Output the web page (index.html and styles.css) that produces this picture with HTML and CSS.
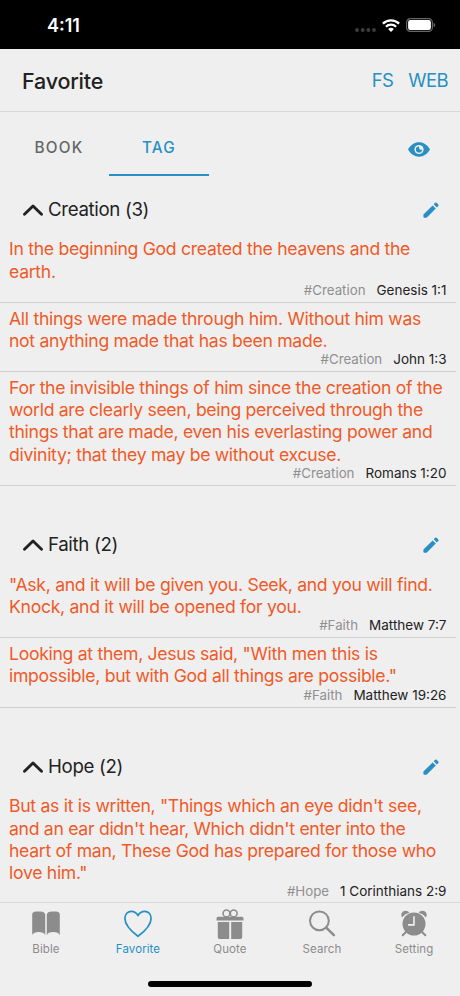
FILE: index.html
```html
<!DOCTYPE html>
<html lang="en">
<head>
<meta charset="utf-8">
<title>Favorite</title>
<link rel="stylesheet" href="styles.css">
</head>
<body>
<svg class="defs" aria-hidden="true">
  <symbol id="chevron" viewBox="0 0 20 12"><path d="M1.500 10.200 10 2l8.500 8.200" fill="none" stroke="currentColor" stroke-width="2.900" stroke-linecap="round" stroke-linejoin="round"/></symbol>
  <symbol id="pencil" viewBox="0 0 16 16"><path d="M.4 12.600 9.600 3.400 12.800 6.600 3.600 15.800H1.400q-1 0-1-1zM10.700 2.300 12.200.8q.7-.7 1.400 0l1.700 1.700q.7.7 0 1.400l-1.500 1.500z" fill="currentColor"/></symbol>
</svg>
<div class="app">
  <header class="status">
    <span class="time">4:11</span>
    <div class="indicators">
      <svg class="cell" viewBox="0 0 22 4"><g fill="#3d3d3d"><circle cx="2" cy="2" r="1.900"/><circle cx="7.700" cy="2" r="1.900"/><circle cx="13.400" cy="2" r="1.900"/><circle cx="19" cy="2" r="1.900"/></g></svg>
      <svg class="wifi" viewBox="0 0 18 13"><g fill="none" stroke="#fff" stroke-width="2.300"><path d="M.9 4.600a11.600 11.600 0 0 1 16.200 0M3.900 7.700a7.300 7.300 0 0 1 10.200 0"/></g><path d="M9 13 6.100 10.100a4.200 4.200 0 0 1 5.800 0z" fill="#fff"/></svg>
      <svg class="battery" viewBox="0 0 30 14"><rect x=".6" y=".6" width="25.800" height="12.800" rx="3.800" fill="none" stroke="#666" stroke-width="1.200"/><rect x="2.100" y="2.100" width="22.800" height="9.800" rx="2.200" fill="#fff"/><path d="M27.600 4.700q1.700.7 1.700 2.300t-1.700 2.300z" fill="#666"/></svg>
    </div>
  </header>
  <div class="titlebar">
    <h1>Favorite</h1>
    <nav class="actions"><span>FS</span><span>WEB</span></nav>
  </div>
  <div class="tabs">
    <span class="tab">BOOK</span>
    <span class="tab active">TAG</span>
    <svg class="eye" viewBox="0 0 22 15"><path d="M0 7.500C2.600 3 6.500.3 11 .3S19.400 3 22 7.500c-2.600 4.500-6.500 7.200-11 7.200S2.600 12 0 7.500z" fill="#278fc3"/><circle cx="11" cy="7.500" r="4.600" fill="#efefef"/><path d="M11 4.400a3.100 3.100 0 1 0 3.100 3.100q-3.100 1.200-3.100-3.100z" fill="#278fc3"/></svg>
  </div>
  <main class="content">
    <section>
      <h2><svg class="chevron"><use href="#chevron"/></svg><span>Creation (3)</span><svg class="pencil"><use href="#pencil"/></svg></h2>
      <article><p>In the beginning God created the heavens and the<br>earth.</p><footer><span class="tag">#Creation</span><span>Genesis 1:1</span></footer></article>
      <article><p>All things were made through him. Without him was<br>not anything made that has been made.</p><footer><span class="tag">#Creation</span><span>John 1:3</span></footer></article>
      <article><p>For the invisible things of him since the creation of the<br>world are clearly seen, being perceived through the<br>things that are made, even his everlasting power and<br>divinity; that they may be without excuse.</p><footer><span class="tag">#Creation</span><span>Romans 1:20</span></footer></article>
    </section>
    <section>
      <h2><svg class="chevron"><use href="#chevron"/></svg><span>Faith (2)</span><svg class="pencil"><use href="#pencil"/></svg></h2>
      <article><p>"Ask, and it will be given you. Seek, and you will find.<br>Knock, and it will be opened for you.</p><footer><span class="tag">#Faith</span><span>Matthew 7:7</span></footer></article>
      <article><p>Looking at them, Jesus said, "With men this is<br>impossible, but with God all things are possible."</p><footer><span class="tag">#Faith</span><span>Matthew 19:26</span></footer></article>
    </section>
    <section>
      <h2><svg class="chevron"><use href="#chevron"/></svg><span>Hope (2)</span><svg class="pencil"><use href="#pencil"/></svg></h2>
      <article><p>But as it is written, "Things which an eye didn't see,<br>and an ear didn't hear, Which didn't enter into the<br>heart of man, These God has prepared for those who<br>love him."</p><footer><span class="tag">#Hope</span><span>1 Corinthians 2:9</span></footer></article>
    </section>
  </main>
  <nav class="bottom">
    <div class="items">
      <div class="item"><svg viewBox="0 0 30 30"><path d="M1.200 5Q1.700 2.600 5 2.500h4.500q4 0 4.700 3v20.800Q13 23 7.700 23 2.700 23 1.200 26zM15.800 5.500q.7-3 4.700-3H25q3.300.1 3.800 2.500v21q-1.500-3-6.500-3-5.300 0-6.500 3.300z" fill="currentColor"/></svg><span>Bible</span></div>
      <div class="item active"><svg viewBox="0 0 30 30"><path d="M15 27.300C10 23.500 1.900 17 1.900 9.400 1.900 5.200 4.700 2.300 8.300 2.300c3 0 5.200 1.500 6.700 4.200 1.500-2.700 3.700-4.200 6.700-4.200 3.600 0 6.400 2.900 6.400 7.100C28.100 17 20 23.500 15 27.300z" fill="none" stroke="currentColor" stroke-width="1.700" stroke-linejoin="round"/></svg><span>Favorite</span></div>
      <div class="item"><svg viewBox="0 0 30 30"><path d="M1.500 9.500q0-1.700 1.700-1.700h23.600q1.700 0 1.700 1.700v1.900h-27zM2.800 13h11.400v16.900H4.500q-1.700 0-1.700-1.700zM16.200 13h11v15.200q0 1.700-1.700 1.700h-9.300z" fill="currentColor"/><circle cx="11.500" cy="4.400" r="3.400" fill="none" stroke="currentColor" stroke-width="1.600"/><circle cx="18.700" cy="4.400" r="3.400" fill="none" stroke="currentColor" stroke-width="1.600"/></svg><span>Quote</span></div>
      <div class="item"><svg viewBox="0 0 30 30"><circle cx="12.400" cy="11.800" r="9.400" fill="none" stroke="currentColor" stroke-width="2"/><path d="m19.200 18.700 7.700 7.500" stroke="currentColor" stroke-width="2.500" stroke-linecap="round"/></svg><span>Search</span></div>
      <div class="item"><svg viewBox="0 0 30 30"><circle cx="15" cy="15" r="11.500" fill="currentColor"/><path d="M3 8.400C1 5 3.500 1.800 6.500 1.800c1.600 0 3 .7 3.800 1.900Q5.500 5 3 8.400zM27 8.400c2-3.400-.5-6.600-3.500-6.600-1.600 0-3 .7-3.800 1.900Q24.500 5 27 8.400z" fill="currentColor"/><path d="m7 23-3.300 3.200M23 23l3.300 3.200" stroke="currentColor" stroke-width="2" stroke-linecap="round"/><path d="M15 7.200v8.700H9" fill="none" stroke="#efefef" stroke-width="1.600"/></svg><span>Setting</span></div>
    </div>
    <div class="home"></div>
  </nav>
</div>
</body>
</html>
```
FILE: styles.css
```css
* { box-sizing: border-box; }
body { margin: 0; background: #efefef; font-family: Inter, "Liberation Sans", sans-serif; color: #222; }
.defs { display: block; width: 0; height: 0; }
.app { width: 460px; height: 996px; display: flex; flex-direction: column; overflow: hidden; }
.status { height: 49px; flex: none; background: #000; display: flex; justify-content: space-between; padding: 0 24px 0 47px; color: #fff; }
.time { font-size: 18px; font-weight: 600; line-height: 51px; }
.indicators { display: flex; align-items: center; padding-top: 1px; }
.cell { width: 22px; height: 4px; margin: 9px 5px 0 0; }
.wifi { width: 18px; height: 13px; margin-right: 6px; }
.battery { width: 30px; height: 14px; }
.titlebar { height: 62.500px; flex: none; border-bottom: 1px solid #d9d9d9; display: flex; justify-content: space-between; align-items: center; padding: 2px 12px 0 22px; }
h1 { margin: 0; font-size: 21.500px; font-weight: 500; letter-spacing: -.2px; }
.actions { display: flex; gap: 15px; font-size: 18.500px; color: #278fc3; padding-bottom: 2px; letter-spacing: -.6px; }
.tabs { height: 75px; flex: none; display: flex; align-items: flex-start; padding: 6.500px 30px 0 9px; }
.tab { width: 100px; height: 58px; text-align: center; font-size: 15.300px; font-weight: 500; letter-spacing: 1.200px; line-height: 60px; color: #666; }
.tab.active { color: #278fc3; border-bottom: 2px solid #278fc3; }
.eye { width: 22px; height: 15px; margin: 24px 0 0 auto; }
.content { flex: 1; min-height: 0; overflow: hidden; }
section { margin-bottom: 36px; }
h2 { margin: 0; height: 47px; display: flex; align-items: center; padding: 0 21px 1px 23px; font-size: 18.700px; font-weight: 400; letter-spacing: -.35px; }
.chevron { width: 20px; height: 12px; margin-right: 5px; }
.pencil { width: 16px; height: 16px; margin-left: auto; color: #278fc3; }
article { border-bottom: 1px solid #d0d0d0; margin-right: 4px; padding: 4.800px 9.500px 3.300px 9px; }
p { margin: 0; font-size: 17.600px; line-height: 22.300px; letter-spacing: -.29px; color: #ef5a28; white-space: nowrap; }
article footer { display: flex; justify-content: flex-end; gap: 11px; font-size: 13.500px; line-height: 15.600px; }
.tag { color: #909090; font-size: 13.300px; }
.bottom { height: 94px; flex: none; border-top: 1px solid #d9d9d9; background: #efefef; }
.items { display: grid; grid-template-columns: repeat(5, 1fr); height: 54px; padding-top: 6px; }
.item { display: flex; flex-direction: column; align-items: center; color: #8c8c8c; font-size: 11.500px; line-height: 16px; letter-spacing: .1px; }
.item svg { width: 30px; height: 30px; }
.item span { margin-top: 2px; }
.item.active { color: #278fc3; }
.home { width: 164px; height: 5.500px; margin: 24px auto 0; border-radius: 3px; background: #000; }
```
